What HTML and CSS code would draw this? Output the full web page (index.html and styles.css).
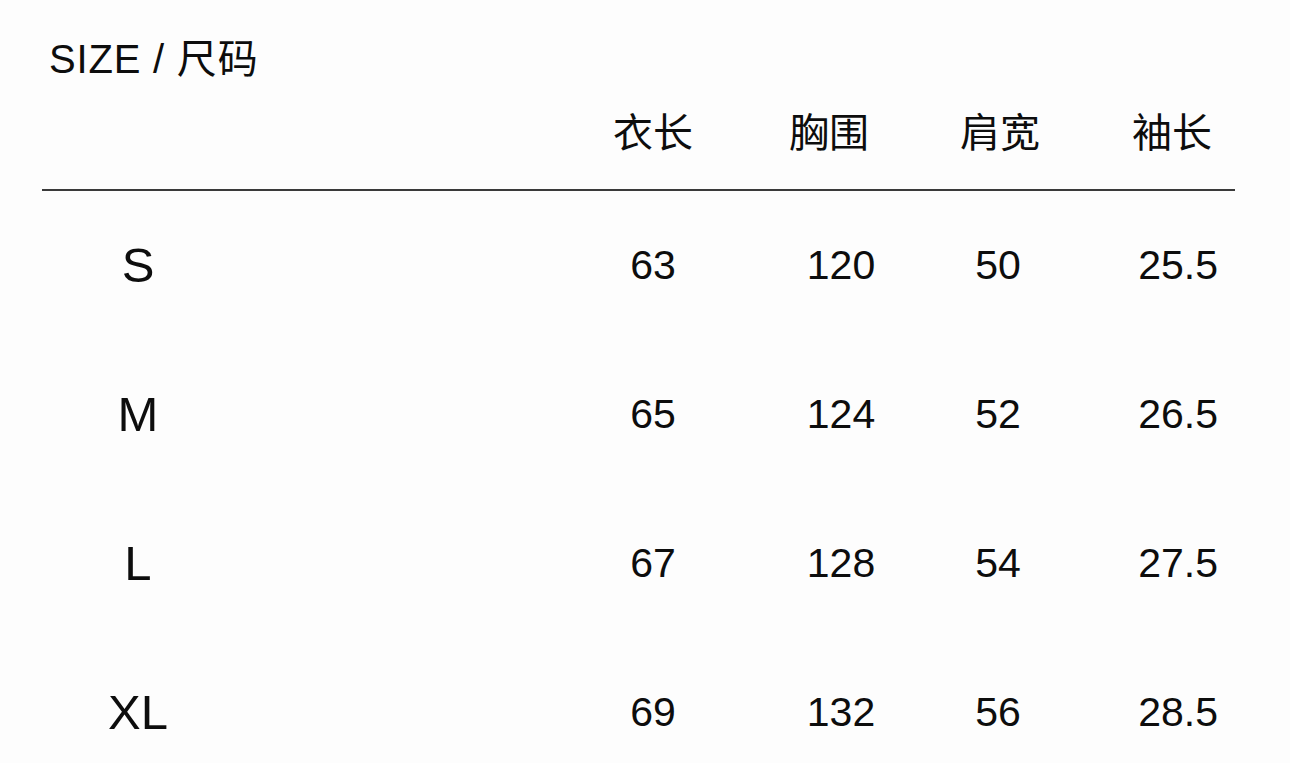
FILE: index.html
```html
<!DOCTYPE html>
<html lang="zh-CN">
<head>
<meta charset="utf-8">
<title>SIZE / 尺码</title>
<link rel="stylesheet" href="styles.css">
</head>
<body>
<main class="sheet">
  <h1 class="title">SIZE / 尺码</h1>
  <div class="table">
    <div class="row head">
      <div class="cell label"></div>
      <div class="spacer"></div>
      <div class="cell c1">衣长</div>
      <div class="cell c2">胸围</div>
      <div class="cell c3">肩宽</div>
      <div class="cell c4">袖长</div>
    </div>
    <div class="row">
      <div class="cell label">S</div>
      <div class="spacer"></div>
      <div class="cell c1">63</div>
      <div class="cell c2">120</div>
      <div class="cell c3">50</div>
      <div class="cell c4">25.5</div>
    </div>
    <div class="row">
      <div class="cell label">M</div>
      <div class="spacer"></div>
      <div class="cell c1">65</div>
      <div class="cell c2">124</div>
      <div class="cell c3">52</div>
      <div class="cell c4">26.5</div>
    </div>
    <div class="row">
      <div class="cell label">L</div>
      <div class="spacer"></div>
      <div class="cell c1">67</div>
      <div class="cell c2">128</div>
      <div class="cell c3">54</div>
      <div class="cell c4">27.5</div>
    </div>
    <div class="row">
      <div class="cell label">XL</div>
      <div class="spacer"></div>
      <div class="cell c1">69</div>
      <div class="cell c2">132</div>
      <div class="cell c3">56</div>
      <div class="cell c4">28.5</div>
    </div>
  </div>
</main>
</body>
</html>
```

FILE: styles.css
```css
html, body {
  margin: 0;
  padding: 0;
  background: #fdfdfd;
}

body {
  font-family: "Liberation Sans", Arial, "Noto Sans CJK SC", sans-serif;
  color: #0d0d0d;
  width: 1290px;
  height: 763px;
  overflow: hidden;
}

.sheet {
  padding: 36px 0 0 42px;
  width: 1193px;
}

.title {
  margin: 0 0 0 7px;
  font-size: 40px;
  font-weight: 400;
  line-height: 46px;
  height: 46px;
  letter-spacing: 0.8px;
}

.table {
  display: flex;
  flex-direction: column;
}

.row {
  display: grid;
  grid-template-columns: 192px 1fr 150px 226px 88px 193px;
  align-items: center;
  height: 149px;
  font-size: 41px;
  line-height: 1;
}

.row.head {
  height: 96px;
  padding-bottom: 11px;
  border-bottom: 2px solid #3a3a3a;
  font-family: "Noto Sans CJK SC", sans-serif;
  font-size: 40px;
}

.cell {
  text-align: center;
  white-space: nowrap;
}

.cell.label {
  font-size: 49px;
}

.cell.c4 {
  text-align: right;
  padding-right: 17px;
}

.head .c2 {
  padding-right: 24px;
}

.head .c3 {
  padding-left: 4px;
}

.head .c4 {
  padding-right: 23px;
}
```
